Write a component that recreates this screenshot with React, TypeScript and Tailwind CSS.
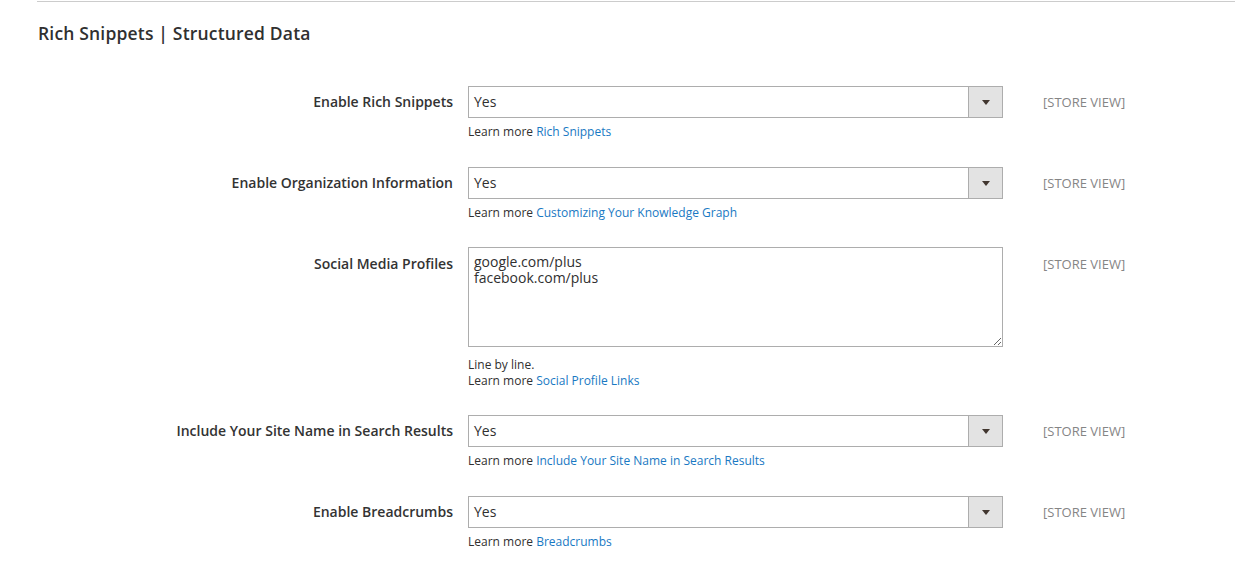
import React from "react"

type Row = {
  label: string
  kind: "select" | "textarea"
  value: string
  note?: string
  link: string
}

const rows: Row[] = [
  { label: "Enable Rich Snippets", kind: "select", value: "Yes", link: "Rich Snippets" },
  { label: "Enable Organization Information", kind: "select", value: "Yes", link: "Customizing Your Knowledge Graph" },
  {
    label: "Social Media Profiles",
    kind: "textarea",
    value: "google.com/plus\nfacebook.com/plus",
    note: "Line by line.",
    link: "Social Profile Links",
  },
  {
    label: "Include Your Site Name in Search Results",
    kind: "select",
    value: "Yes",
    link: "Include Your Site Name in Search Results",
  },
  { label: "Enable Breadcrumbs", kind: "select", value: "Yes", link: "Breadcrumbs" },
]

function Select({ value }: { value: string }) {
  return (
    <div className="flex h-[32px] w-[535px] border border-[#adadad] bg-white">
      <div className="flex flex-1 items-center pb-px pl-[5px] text-[14px] text-[#303030]">{value}</div>
      <div className="flex w-[34px] items-center justify-center border-l border-[#adadad] bg-[#e3e3e3]">
        <svg width="8" height="5" viewBox="0 0 8 5">
          <path d="M0 0h8L4 5z" fill="#41362f" />
        </svg>
      </div>
    </div>
  )
}

function Field({ row }: { row: Row }) {
  const isArea = row.kind === "textarea"
  return (
    <div className={`${isArea ? "mb-[26px]" : "mb-[27px]"} flex items-start`}>
      <div className="w-[416px] shrink-0 pt-[6px] text-right text-[14px] leading-[20px] font-semibold text-[#333333]">
        {row.label}
      </div>
      <div className="ml-[15px] w-[535px] shrink-0">
        {isArea ? (
          <textarea
            readOnly
            defaultValue={row.value}
            className="-mt-px block h-[100px] w-[535px] resize-y border border-[#adadad] bg-white px-[5px] pt-[6px] text-[14px] leading-[16px] text-[#303030] outline-none"
          />
        ) : (
          <Select value={row.value} />
        )}
        <div className={`${isArea ? "mt-[10px]" : "mt-[6px]"} text-[12px] leading-[16px] text-[#303030]`}>
          {row.note && <div>{row.note}</div>}
          <div>
            Learn more <a className="text-[#1979c3]">{row.link}</a>
          </div>
        </div>
      </div>
      <div className="ml-[40px] pt-[8px] text-[13px] leading-[16px] text-[#858585]">[STORE VIEW]</div>
    </div>
  )
}

export default function App() {
  return (
    <div className="min-h-[572px] bg-white pt-px pl-[37px]" style={{ fontFamily: '"Open Sans", sans-serif' }}>
      <div className="border-t border-[#cccccc]" />
      <h2 className="mt-[21px] ml-px text-[17.5px] leading-[20px] font-semibold tracking-[0.01em] text-[#303030]">
        Rich Snippets | Structured Data
      </h2>
      <div className="mt-[43px]">
        {rows.map((r) => (
          <Field key={r.label} row={r} />
        ))}
      </div>
    </div>
  )
}
